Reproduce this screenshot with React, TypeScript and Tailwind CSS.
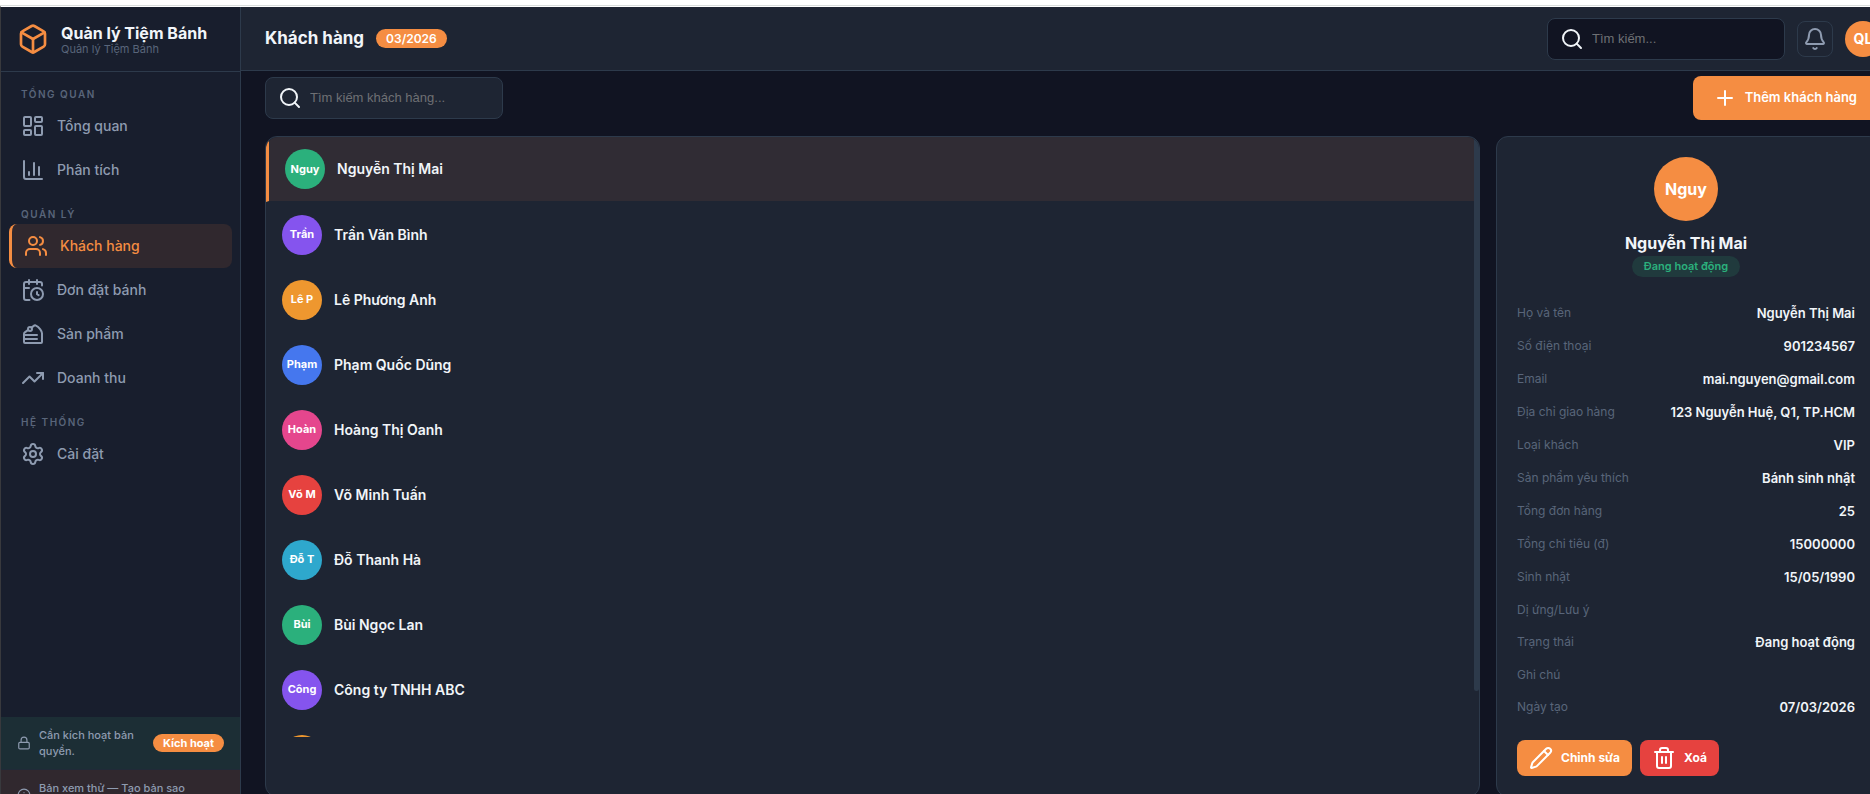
import type { ReactNode } from 'react';
import {
  Bell,
  Box,
  CalendarClock,
  ChartColumn,
  Info,
  LayoutDashboard,
  Lock,
  Pencil,
  Plus,
  Search,
  Settings,
  Trash2,
  TrendingUp,
  Users,
} from 'lucide-react';

type NavItem = {
  label: string;
  icon: ReactNode;
  active?: boolean;
};

type NavGroup = {
  title: string;
  items: NavItem[];
};

const CakeIcon = () => (
  <svg
    width="24"
    height="24"
    viewBox="0 0 24 24"
    fill="none"
    stroke="currentColor"
    strokeWidth="2"
    strokeLinecap="round"
    strokeLinejoin="round"
  >
    <path d="M16 13H3M16 17H3" />
    <path d="m7.2 7.9-3.388 2.5A2 2 0 0 0 3 12.01V20a1 1 0 0 0 1 1h16a1 1 0 0 0 1-1v-8.654c0-2-2.44-6.026-6.44-8.026a1 1 0 0 0-1.082.057L10.4 5.6" />
    <circle cx="9" cy="7" r="2" />
  </svg>
);

const navGroups: NavGroup[] = [
  {
    title: 'Tổng quan',
    items: [
      { label: 'Tổng quan', icon: <LayoutDashboard /> },
      { label: 'Phân tích', icon: <ChartColumn /> },
    ],
  },
  {
    title: 'Quản lý',
    items: [
      { label: 'Khách hàng', icon: <Users />, active: true },
      { label: 'Đơn đặt bánh', icon: <CalendarClock /> },
      { label: 'Sản phẩm', icon: <CakeIcon /> },
      { label: 'Doanh thu', icon: <TrendingUp /> },
    ],
  },
  {
    title: 'Hệ thống',
    items: [{ label: 'Cài đặt', icon: <Settings /> }],
  },
];

const customers = [
  { name: 'Nguyễn Thị Mai', short: 'Nguy', color: 'bg-[#2bb07c]' },
  { name: 'Trần Văn Bình', short: 'Trần', color: 'bg-[#8554ee]' },
  { name: 'Lê Phương Anh', short: 'Lê P', color: 'bg-[#ee972f]' },
  { name: 'Phạm Quốc Dũng', short: 'Phạm', color: 'bg-[#4577ee]' },
  { name: 'Hoàng Thị Oanh', short: 'Hoàn', color: 'bg-[#e5468d]' },
  { name: 'Võ Minh Tuấn', short: 'Võ M', color: 'bg-[#e6423f]' },
  { name: 'Đỗ Thanh Hà', short: 'Đỗ T', color: 'bg-[#2ea8cd]' },
  { name: 'Bùi Ngọc Lan', short: 'Bùi', color: 'bg-[#2bb07c]' },
  { name: 'Công ty TNHH ABC', short: 'Công', color: 'bg-[#8554ee]' },
];

const details = [
  { label: 'Họ và tên', value: 'Nguyễn Thị Mai' },
  { label: 'Số điện thoại', value: '901234567' },
  { label: 'Email', value: 'mai.nguyen@gmail.com' },
  { label: 'Địa chỉ giao hàng', value: '123 Nguyễn Huệ, Q1, TP.HCM' },
  { label: 'Loại khách', value: 'VIP' },
  { label: 'Sản phẩm yêu thích', value: 'Bánh sinh nhật' },
  { label: 'Tổng đơn hàng', value: '25' },
  { label: 'Tổng chi tiêu (đ)', value: '15000000' },
  { label: 'Sinh nhật', value: '15/05/1990' },
  { label: 'Dị ứng/Lưu ý', value: '' },
  { label: 'Trạng thái', value: 'Đang hoạt động' },
  { label: 'Ghi chú', value: '' },
  { label: 'Ngày tạo', value: '07/03/2026' },
];

const Sidebar = () => (
  <aside className="flex w-60 shrink-0 flex-col border-r border-[#2d3a4b] bg-[#181e2d]">
    <div className="flex h-[65px] shrink-0 items-center gap-3 border-b border-[#2d3a4b] px-4">
      <Box size={32} className="text-[#f58d42]" />
      <div>
        <div className="text-base leading-5 font-bold text-[#f1f5f9]">
          Quản lý Tiệm Bánh
        </div>
        <div className="text-[11px] leading-3 text-[#59657a]">Quản lý Tiệm Bánh</div>
      </div>
    </div>

    <nav className="flex min-h-0 flex-1 flex-col gap-2 overflow-hidden px-2 py-2">
      {navGroups.map((group) => (
        <div key={group.title}>
          <h2 className="px-3 pt-1.5 pb-0.5 text-[10px] leading-4 font-semibold tracking-[1.5px] text-[#59657a] uppercase">
            {group.title}
          </h2>
          {group.items.map((item) => (
            <a
              key={item.label}
              href="#"
              className={
                item.active
                  ? 'flex h-11 items-center gap-3 rounded-lg border-l-[3px] border-[#f58d42] bg-[#30282e] px-3 text-sm font-medium text-[#f58d42]'
                  : 'flex h-11 items-center gap-3 rounded-lg px-3 text-sm font-medium text-[#8e9bb0]'
              }
            >
              {item.icon}
              {item.label}
            </a>
          ))}
        </div>
      ))}
    </nav>

    <div className="flex shrink-0 items-center gap-2 bg-[#1c2e35] px-4 py-2.5 text-[11px] leading-4 font-medium text-[#8e9bb0]">
      <Lock size={14} className="shrink-0" />
      <span className="flex-1">Cần kích hoạt bản quyền.</span>
      <button className="rounded-full bg-[#f58d42] px-2.5 py-px text-[11px] leading-4 font-bold text-white">
        Kích hoạt
      </button>
    </div>
    <div className="flex h-[25px] shrink-0 items-start gap-2 overflow-hidden border-t border-[#202a38] bg-[#30282e] px-4 pt-2.5 text-[11px] leading-4 font-medium text-[#8e9bb0]">
      <Info size={14} className="mt-2 shrink-0" />
      <span>Bản xem thử — Tạo bản sao</span>
    </div>
  </aside>
);

const Header = () => (
  <header className="flex h-16 shrink-0 items-center gap-3 border-b border-[#2d3a4b] bg-[#1e2533] px-6">
    <h1 className="text-[17px] font-bold text-[#f1f5f9]">Khách hàng</h1>
    <span className="rounded-full bg-[#f58d42] px-2.5 text-xs leading-[19px] font-semibold text-white">
      03/2026
    </span>
    <label className="ml-auto flex h-[42px] w-[238px] items-center gap-2 rounded-lg border border-[#2d3a4b] bg-[#111422] px-3 text-[#f1f5f9]">
      <Search className="shrink-0" />
      <input
        type="search"
        aria-label="Tìm kiếm"
        placeholder="Tìm kiếm..."
        className="min-w-0 flex-1 bg-transparent font-['Liberation_Sans',sans-serif] text-[13px] outline-none placeholder:text-[#6e7074]"
      />
    </label>
    <button
      aria-label="Thông báo"
      className="flex size-9 items-center justify-center rounded-lg border border-[#2d3a4b] text-[#8e9bb0]"
    >
      <Bell />
    </button>
    <div className="flex size-9 items-center justify-center rounded-full bg-[#f58d42] text-sm font-bold text-white">
      QL
    </div>
  </header>
);

const CustomerList = () => (
  <section className="flex-1 rounded-xl border border-[#2d3a4b] bg-[#1e2533]">
    <div className="flex h-[600px] overflow-hidden rounded-t-xl">
      <ul className="flex-1">
        {customers.map((customer, index) => (
          <li key={customer.name}>
            <button
              className={
                index === 0
                  ? 'flex h-[65px] w-full items-center gap-3 border-b border-l-[3px] border-b-[#1e2533] border-l-[#f58d42] bg-[#302c34] px-4'
                  : 'flex h-[65px] w-full items-center gap-3 px-4'
              }
            >
              <span
                className={`flex size-10 items-center justify-center rounded-full text-[11px] font-bold text-white ${customer.color}`}
              >
                {customer.short}
              </span>
              <span className="text-sm font-semibold text-[#f1f5f9]">
                {customer.name}
              </span>
            </button>
          </li>
        ))}
        <li className="flex h-[65px] items-center px-4">
          <span className="size-10 rounded-full bg-[#ee972f]" />
        </li>
      </ul>
      <div className="h-[554px] w-[5px] rounded-full bg-[#2d3a4b]" />
    </div>
  </section>
);

const CustomerDetail = () => (
  <aside className="w-[385px] shrink-0 rounded-xl border border-[#2d3a4b] bg-[#1e2533] py-5 pr-[25px] pl-5">
    <div className="flex flex-col items-center">
      <div className="flex size-16 items-center justify-center rounded-full bg-[#f58d42] text-base font-bold text-white">
        Nguy
      </div>
      <h2 className="mt-3 text-base leading-5 font-bold text-[#f1f5f9]">
        Nguyễn Thị Mai
      </h2>
      <span className="mt-[3px] rounded-full bg-[#203a3d] px-3 text-[11px] leading-[21px] font-semibold text-[#2bb07c]">
        Đang hoạt động
      </span>
    </div>

    <dl className="mt-5">
      {details.map((row) => (
        <div key={row.label} className="flex justify-between py-2">
          <dt className="text-xs text-[#59657a]">{row.label}</dt>
          <dd className="text-[13px] leading-[17px] font-semibold text-[#f1f5f9]">
            {row.value}
          </dd>
        </div>
      ))}
    </dl>

    <div className="mt-4 flex gap-2">
      <button className="flex h-9 items-center gap-2 rounded-lg bg-[#f58d42] px-3 text-xs font-bold text-white">
        <Pencil />
        Chỉnh sửa
      </button>
      <button className="flex h-9 items-center gap-2 rounded-lg bg-[#e6423f] px-3 text-xs font-bold text-white">
        <Trash2 />
        Xoá
      </button>
    </div>
  </aside>
);

const App = () => (
  <div className="flex h-screen flex-col overflow-hidden bg-[#111422] font-[Inter,sans-serif]">
    <div className="h-1.5 shrink-0 border-b border-[#d9dddc] bg-white" />
    {/* The content is a little wider than the window and is cut at the right */}
    <div className="-mr-[35px] flex min-h-0 flex-1 border-t border-l border-t-white border-l-[#38393d]">
      <Sidebar />
      <div className="flex min-w-0 flex-1 flex-col">
        <Header />
        <main className="flex flex-1 flex-col px-6 pt-[5px]">
          <div className="flex items-center justify-between">
            <label className="flex h-[42px] w-[238px] items-center gap-2 rounded-lg border border-[#2d3a4b] bg-[#1e2533] px-3 text-[#f1f5f9]">
              <Search className="shrink-0" />
              <input
                type="search"
                aria-label="Tìm kiếm khách hàng"
                placeholder="Tìm kiếm khách hàng..."
                className="min-w-0 flex-1 bg-transparent font-['Liberation_Sans',sans-serif] text-[13px] outline-none placeholder:text-[#6e7074]"
              />
            </label>
            <button className="flex h-11 items-center gap-2 rounded-lg bg-[#f58d42] pr-6 pl-5 text-[13px] font-semibold text-white">
              <Plus />
              Thêm khách hàng
            </button>
          </div>
          <div className="mt-4 flex flex-1 gap-4">
            <CustomerList />
            <CustomerDetail />
          </div>
        </main>
      </div>
    </div>
  </div>
);

export default App;
